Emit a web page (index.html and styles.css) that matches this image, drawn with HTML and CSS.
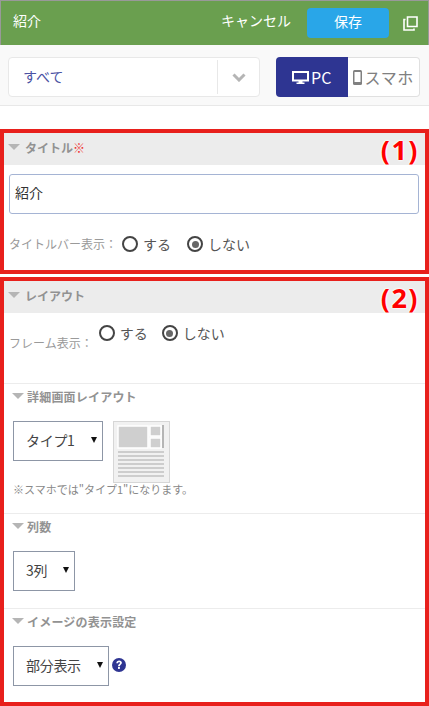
FILE: index.html
```html
<!DOCTYPE html>
<html lang="ja">
<head>
<meta charset="utf-8">
<title>紹介</title>
<link rel="stylesheet" href="styles.css">
</head>
<body>
<div class="app">
  <header class="topbar">
    <span class="topbar-title">紹介</span>
    <span class="cancel">キャンセル</span>
    <button class="save">保存</button>
    <svg class="copy" width="15" height="15" viewBox="0 0 15 15"><path d="M4.500 1h9.500v9.500H4.500z" fill="none" stroke="#fff" stroke-width="1.600"/><path d="M2.500 3.500H1V14h10v-1.500" fill="none" stroke="#fff" stroke-width="1.600"/></svg>
  </header>
  <div class="toolbar">
    <div class="filter">
      <span class="filter-text">すべて</span>
      <span class="filter-arrow"><svg width="14" height="9" viewBox="0 0 14 9"><path d="M1.500 1.500 7 7l5.500-5.500" fill="none" stroke="#b5b5b5" stroke-width="3"/></svg></span>
    </div>
    <div class="device">
      <span class="device-btn active"><svg width="17" height="13" viewBox="0 0 17 13"><path d="M1 1h15v8.500H1z" fill="none" stroke="#fff" stroke-width="2"/><path d="M4.500 11.500h8V13h-8z" fill="#fff"/><path d="M6.500 10h4v2h-4z" fill="#fff"/></svg>PC</span>
      <span class="device-btn"><svg width="9" height="15" viewBox="0 0 9 15"><rect x="0" y="0" width="9" height="15" rx="1.500" fill="#808080"/><rect x="1.500" y="2" width="6" height="10" fill="#fff"/></svg><span class="device-label">スマホ</span></span>
    </div>
  </div>

  <section class="panel panel-one">
    <span class="mark">(1)</span>
    <h2 class="panel-head"><i class="tri"></i><span class="head-text">タイトル<em class="req">※</em></span></h2>
    <div class="title-input">紹介</div>
    <div class="radio-row">
      <span class="field-label">タイトルバー表示：</span>
      <span class="radio"><i class="dot"></i>する</span>
      <span class="radio radio-second"><i class="dot on"></i>しない</span>
    </div>
  </section>

  <section class="panel panel-two">
    <span class="mark">(2)</span>
    <h2 class="panel-head"><i class="tri"></i><span class="head-text">レイアウト</span></h2>
    <div class="frame-row">
      <span class="field-label frame-label">フレーム表示：</span>
      <span class="radio"><i class="dot"></i>する</span>
      <span class="radio radio-frame"><i class="dot on"></i>しない</span>
    </div>
    <div class="group group-detail">
      <h3 class="group-head"><i class="tri small"></i><span class="head-text">詳細画面レイアウト</span></h3>
      <div class="detail-row">
        <div class="select select-type"><span class="select-text">タイプ1</span><i class="caret"></i></div>
        <svg class="thumb" width="57" height="62" viewBox="0 0 57 62">
          <rect x=".5" y=".5" width="56" height="61" fill="#f1f1f1" stroke="#d6d6d6"/>
          <rect x="5" y="5" width="30" height="22" fill="#cfcfcf" stroke="#fff" stroke-width="1.500"/>
          <rect x="37" y="5" width="11" height="10" fill="#cfcfcf" stroke="#fff" stroke-width="1.500"/>
          <rect x="37" y="17" width="11" height="10" fill="#cfcfcf" stroke="#fff" stroke-width="1.500"/>
          <rect x="49" y="4" width="2" height="23" fill="#b5b5b5"/>
          <path d="M5 30h46v2H5zM5 34h46v2H5zM5 38h46v2H5zM5 42h46v2H5zM5 46h46v2H5zM5 50h46v2H5zM5 54h46v2H5z" fill="#cdcdcd"/>
        </svg>
      </div>
      <p class="note">※スマホでは"タイプ1"になります。</p>
    </div>
    <div class="group group-cols">
      <h3 class="group-head"><i class="tri small"></i><span class="head-text">列数</span></h3>
      <div class="select select-cols"><span class="select-text">3列</span><i class="caret"></i></div>
    </div>
    <div class="group group-image">
      <h3 class="group-head"><i class="tri small"></i><span class="head-text">イメージの表示設定</span></h3>
      <div class="image-row">
        <div class="select select-image"><span class="select-text">部分表示</span><i class="caret"></i></div>
        <svg class="help" width="14" height="14" viewBox="0 0 14 14"><circle cx="7" cy="7" r="7" fill="#2e3592"/><path d="M4.300 5.300C4.400 3.500 5.600 2.500 7.200 2.500c1.600 0 2.700 1 2.700 2.300 0 1.900-2 1.900-2 3.400H6C6 6.100 7.900 6 7.900 4.900c0-.5-.3-.8-.8-.8-.6 0-.9.400-1 1.200z" fill="#fff"/><rect x="6" y="9" width="1.900" height="1.900" fill="#fff"/></svg>
      </div>
    </div>
  </section>
</div>
</body>
</html>
```

FILE: styles.css
```css
* { box-sizing: border-box; }
html, body { margin: 0; padding: 0; background: #fff; }
body {
  width: 429px;
  height: 706px;
  overflow: hidden;
  font-family: "Noto Sans CJK JP", "Open Sans", sans-serif;
  font-size: 14px;
  color: #666;
}
.app { display: flex; flex-direction: column; height: 706px; }

.topbar {
  display: flex;
  align-items: center;
  height: 45px;
  padding: 0 10px 0 12px;
  background: #6a9f4f;
  border: 1px solid #999;
  border-width: 1px 1px 0;
  color: #fff;
}
.topbar-title { font-size: 14px; line-height: 20px; padding-bottom: 6px; margin-right: auto; }
.cancel { font-size: 14px; line-height: 20px; padding-bottom: 6px; margin-right: 16px; }
.save {
  width: 82px;
  height: 30px;
  padding: 0 0 5px;
  margin-right: 14px;
  border: 0;
  border-radius: 4px;
  background: #29a6e8;
  color: #fff;
  font: inherit;
  font-size: 14px;
}
.copy { display: block; }

.toolbar {
  display: flex;
  align-items: center;
  gap: 16px;
  height: 61px;
  padding: 4px 9px 0 8px;
  background: #f9f9f9;
  border-bottom: 1px solid #e8e8e8;
}
.filter {
  display: flex;
  align-items: center;
  width: 252px;
  height: 40px;
  background: #fff;
  border: 1px solid #e8e8e8;
  border-radius: 4px;
}
.filter-text { flex: 1; padding: 0 0 2px 14px; color: #4a52a3; font-size: 14px; line-height: 20px; }
.filter-arrow {
  display: flex;
  align-items: center;
  justify-content: center;
  width: 42px;
  height: 34px;
  border-left: 1px solid #e8e8e8;
}
.device { display: flex; width: 144px; height: 40px; }
.device-btn {
  display: flex;
  flex: 1;
  align-items: center;
  justify-content: center;
  gap: 3px;
  background: #fff;
  border: 1px solid #e0e0e0;
  border-left: 0;
  border-radius: 0 4px 4px 0;
  color: #808080;
  font-size: 16px;
  white-space: nowrap;
}
.device-label { letter-spacing: 0.6px; }
.device-btn.active {
  gap: 2px;
  background: #2e3592;
  border: 0;
  border-radius: 4px 0 0 4px;
  color: #fff;
}

.panel {
  position: relative;
  border: 4px solid #e8201c;
  background: #fff;
}
.panel-one { height: 145px; margin-top: 23px; }
.panel-two { height: 429px; margin-top: 3px; }
.mark {
  position: absolute;
  top: 1px;
  right: 6px;
  color: #f00;
  font-family: "Open Sans", sans-serif;
  font-size: 27px;
  font-weight: 700;
  letter-spacing: 1.500px;
  line-height: 32px;
  text-shadow: 0 0 2px #fff, 0 0 2px #fff, 0 0 3px #fff;
}
.panel-head {
  display: flex;
  align-items: center;
  height: 32px;
  margin: 0;
  padding: 0 0 4px 4px;
  background: #ececec;
  color: #929292;
  font-size: 12px;
  font-weight: 700;
}
.head-text { margin-left: 5px; }
.tri {
  width: 0;
  height: 0;
  border: 6px solid transparent;
  border-top: 6px solid #b5b5b5;
  border-bottom: 0;
}
.tri.small { margin-left: -1px; }
.group-head .head-text { margin-left: 3px; letter-spacing: 0.2px; }
.req { color: #f03030; font-style: normal; font-weight: 400; }

.title-input {
  height: 40px;
  margin: 9px 6px 0 5px;
  padding-left: 5px;
  border: 1px solid #a5b4d4;
  border-radius: 3px;
  color: #333;
  font-size: 14px;
  line-height: 35px;
}
.radio-row { display: flex; align-items: center; height: 20px; margin: 20px 0 0 5px; }
.field-label { color: #9a9a9a; font-size: 12px; line-height: 18px; margin-right: 5px; }
.radio { display: flex; align-items: center; gap: 5px; color: #555; font-size: 14px; line-height: 20px; }
.radio-second { margin-left: 16px; }
.radio-frame { margin-left: 14px; }
.dot {
  display: flex;
  align-items: center;
  justify-content: center;
  width: 16px;
  height: 16px;
  border: 2px solid #444;
  border-radius: 50%;
}
.dot.on::after {
  content: "";
  width: 7px;
  height: 7px;
  border-radius: 50%;
  background: #666;
}

.frame-row { display: flex; align-items: flex-start; height: 70px; padding: 10px 0 0 5px; }
.frame-label { margin-top: 11px; margin-right: 6px; }

.group { padding-left: 9px; border-top: 1px solid #ececec; }
.group-head {
  display: flex;
  align-items: center;
  height: 26px;
  margin: 0;
  padding-bottom: 2px;
  color: #929292;
  font-size: 12px;
  font-weight: 700;
}
.group-detail { height: 130px; }
.group-cols { height: 95px; }
.group-image { height: 93px; }
.detail-row { display: flex; align-items: flex-start; gap: 10px; margin-top: 11px; }
.select {
  display: flex;
  align-items: center;
  justify-content: space-between;
  height: 40px;
  padding: 0 5px 0 12px;
  border: 1px solid #8d96a6;
  background: #fff;
  color: #444;
  font-size: 14px;
}
.select-text { padding-bottom: 2px; letter-spacing: -0.3px; }
.select-type { width: 90px; }
.select-cols { width: 62px; margin-top: 11px; }
.select-image { width: 96px; }
.caret {
  width: 0;
  height: 0;
  margin-top: -2px;
  border: 3.5px solid transparent;
  border-top: 6px solid #111;
  border-bottom: 0;
}
.thumb { display: block; flex: none; }
.note { margin: -2px 0 0; color: #888; font-size: 11px; line-height: 16px; }
.image-row { display: flex; align-items: center; gap: 3px; margin-top: 11px; }
.help { display: block; margin-top: -3px; }
```
